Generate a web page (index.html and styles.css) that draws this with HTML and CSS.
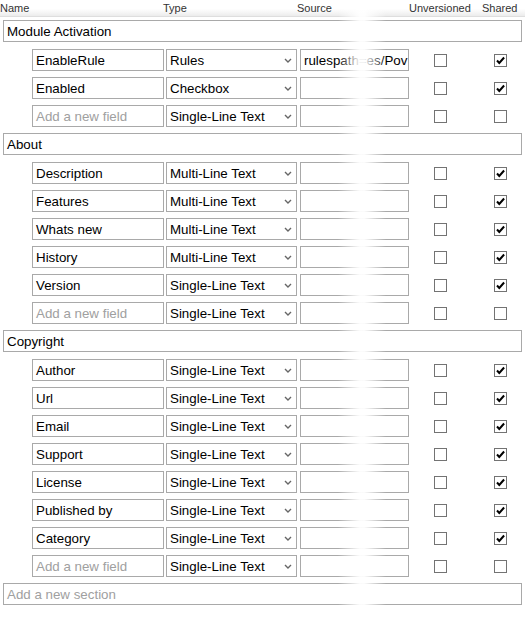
FILE: index.html
```html
<!DOCTYPE html>
<html>
<head>
<meta charset="utf-8">
<link rel="stylesheet" href="styles.css">
</head>
<body>
<div class="editor">
  <div class="head">
    <span>Name</span><span>Type</span><span>Source</span><span>Unversioned</span><span>Shared</span>
  </div>
  <div class="list">
    <div class="section">Module Activation</div>
    <div class="fields">
      <div class="row"><div class="box name">EnableRule</div><div class="box sel">Rules<svg class="chev" width="8" height="5" viewBox="0 0 8 5"><path d="M1 1l3 3 3-3" fill="none" stroke="#666" stroke-width="1.4"/></svg></div><div class="box src">rulespath=es/Pov</div><span class="cb"></span><span class="cb on"><svg width="11" height="11" viewBox="0 0 11 11"><path d="M2 5.5l2.3 2.5 4.8-5.5" fill="none" stroke="#000" stroke-width="2"/></svg></span></div>
      <div class="row"><div class="box name">Enabled</div><div class="box sel">Checkbox<svg class="chev" width="8" height="5" viewBox="0 0 8 5"><path d="M1 1l3 3 3-3" fill="none" stroke="#666" stroke-width="1.4"/></svg></div><div class="box src"></div><span class="cb"></span><span class="cb on"><svg width="11" height="11" viewBox="0 0 11 11"><path d="M2 5.5l2.3 2.5 4.8-5.5" fill="none" stroke="#000" stroke-width="2"/></svg></span></div>
      <div class="row"><div class="box name ph">Add a new field</div><div class="box sel">Single-Line Text<svg class="chev" width="8" height="5" viewBox="0 0 8 5"><path d="M1 1l3 3 3-3" fill="none" stroke="#666" stroke-width="1.4"/></svg></div><div class="box src"></div><span class="cb"></span><span class="cb"></span></div>
    </div>

    <div class="section">About</div>
    <div class="fields">
      <div class="row"><div class="box name">Description</div><div class="box sel">Multi-Line Text<svg class="chev" width="8" height="5" viewBox="0 0 8 5"><path d="M1 1l3 3 3-3" fill="none" stroke="#666" stroke-width="1.4"/></svg></div><div class="box src"></div><span class="cb"></span><span class="cb on"><svg width="11" height="11" viewBox="0 0 11 11"><path d="M2 5.5l2.3 2.5 4.8-5.5" fill="none" stroke="#000" stroke-width="2"/></svg></span></div>
      <div class="row"><div class="box name">Features</div><div class="box sel">Multi-Line Text<svg class="chev" width="8" height="5" viewBox="0 0 8 5"><path d="M1 1l3 3 3-3" fill="none" stroke="#666" stroke-width="1.4"/></svg></div><div class="box src"></div><span class="cb"></span><span class="cb on"><svg width="11" height="11" viewBox="0 0 11 11"><path d="M2 5.5l2.3 2.5 4.8-5.5" fill="none" stroke="#000" stroke-width="2"/></svg></span></div>
      <div class="row"><div class="box name">Whats new</div><div class="box sel">Multi-Line Text<svg class="chev" width="8" height="5" viewBox="0 0 8 5"><path d="M1 1l3 3 3-3" fill="none" stroke="#666" stroke-width="1.4"/></svg></div><div class="box src"></div><span class="cb"></span><span class="cb on"><svg width="11" height="11" viewBox="0 0 11 11"><path d="M2 5.5l2.3 2.5 4.8-5.5" fill="none" stroke="#000" stroke-width="2"/></svg></span></div>
      <div class="row"><div class="box name">History</div><div class="box sel">Multi-Line Text<svg class="chev" width="8" height="5" viewBox="0 0 8 5"><path d="M1 1l3 3 3-3" fill="none" stroke="#666" stroke-width="1.4"/></svg></div><div class="box src"></div><span class="cb"></span><span class="cb on"><svg width="11" height="11" viewBox="0 0 11 11"><path d="M2 5.5l2.3 2.5 4.8-5.5" fill="none" stroke="#000" stroke-width="2"/></svg></span></div>
      <div class="row"><div class="box name">Version</div><div class="box sel">Single-Line Text<svg class="chev" width="8" height="5" viewBox="0 0 8 5"><path d="M1 1l3 3 3-3" fill="none" stroke="#666" stroke-width="1.4"/></svg></div><div class="box src"></div><span class="cb"></span><span class="cb on"><svg width="11" height="11" viewBox="0 0 11 11"><path d="M2 5.5l2.3 2.5 4.8-5.5" fill="none" stroke="#000" stroke-width="2"/></svg></span></div>
      <div class="row"><div class="box name ph">Add a new field</div><div class="box sel">Single-Line Text<svg class="chev" width="8" height="5" viewBox="0 0 8 5"><path d="M1 1l3 3 3-3" fill="none" stroke="#666" stroke-width="1.4"/></svg></div><div class="box src"></div><span class="cb"></span><span class="cb"></span></div>
    </div>

    <div class="section">Copyright</div>
    <div class="fields">
      <div class="row"><div class="box name">Author</div><div class="box sel">Single-Line Text<svg class="chev" width="8" height="5" viewBox="0 0 8 5"><path d="M1 1l3 3 3-3" fill="none" stroke="#666" stroke-width="1.4"/></svg></div><div class="box src"></div><span class="cb"></span><span class="cb on"><svg width="11" height="11" viewBox="0 0 11 11"><path d="M2 5.5l2.3 2.5 4.8-5.5" fill="none" stroke="#000" stroke-width="2"/></svg></span></div>
      <div class="row"><div class="box name">Url</div><div class="box sel">Single-Line Text<svg class="chev" width="8" height="5" viewBox="0 0 8 5"><path d="M1 1l3 3 3-3" fill="none" stroke="#666" stroke-width="1.4"/></svg></div><div class="box src"></div><span class="cb"></span><span class="cb on"><svg width="11" height="11" viewBox="0 0 11 11"><path d="M2 5.5l2.3 2.5 4.8-5.5" fill="none" stroke="#000" stroke-width="2"/></svg></span></div>
      <div class="row"><div class="box name">Email</div><div class="box sel">Single-Line Text<svg class="chev" width="8" height="5" viewBox="0 0 8 5"><path d="M1 1l3 3 3-3" fill="none" stroke="#666" stroke-width="1.4"/></svg></div><div class="box src"></div><span class="cb"></span><span class="cb on"><svg width="11" height="11" viewBox="0 0 11 11"><path d="M2 5.5l2.3 2.5 4.8-5.5" fill="none" stroke="#000" stroke-width="2"/></svg></span></div>
      <div class="row"><div class="box name">Support</div><div class="box sel">Single-Line Text<svg class="chev" width="8" height="5" viewBox="0 0 8 5"><path d="M1 1l3 3 3-3" fill="none" stroke="#666" stroke-width="1.4"/></svg></div><div class="box src"></div><span class="cb"></span><span class="cb on"><svg width="11" height="11" viewBox="0 0 11 11"><path d="M2 5.5l2.3 2.5 4.8-5.5" fill="none" stroke="#000" stroke-width="2"/></svg></span></div>
      <div class="row"><div class="box name">License</div><div class="box sel">Single-Line Text<svg class="chev" width="8" height="5" viewBox="0 0 8 5"><path d="M1 1l3 3 3-3" fill="none" stroke="#666" stroke-width="1.4"/></svg></div><div class="box src"></div><span class="cb"></span><span class="cb on"><svg width="11" height="11" viewBox="0 0 11 11"><path d="M2 5.5l2.3 2.5 4.8-5.5" fill="none" stroke="#000" stroke-width="2"/></svg></span></div>
      <div class="row"><div class="box name">Published by</div><div class="box sel">Single-Line Text<svg class="chev" width="8" height="5" viewBox="0 0 8 5"><path d="M1 1l3 3 3-3" fill="none" stroke="#666" stroke-width="1.4"/></svg></div><div class="box src"></div><span class="cb"></span><span class="cb on"><svg width="11" height="11" viewBox="0 0 11 11"><path d="M2 5.5l2.3 2.5 4.8-5.5" fill="none" stroke="#000" stroke-width="2"/></svg></span></div>
      <div class="row"><div class="box name">Category</div><div class="box sel">Single-Line Text<svg class="chev" width="8" height="5" viewBox="0 0 8 5"><path d="M1 1l3 3 3-3" fill="none" stroke="#666" stroke-width="1.4"/></svg></div><div class="box src"></div><span class="cb"></span><span class="cb on"><svg width="11" height="11" viewBox="0 0 11 11"><path d="M2 5.5l2.3 2.5 4.8-5.5" fill="none" stroke="#000" stroke-width="2"/></svg></span></div>
      <div class="row"><div class="box name ph">Add a new field</div><div class="box sel">Single-Line Text<svg class="chev" width="8" height="5" viewBox="0 0 8 5"><path d="M1 1l3 3 3-3" fill="none" stroke="#666" stroke-width="1.4"/></svg></div><div class="box src"></div><span class="cb"></span><span class="cb"></span></div>
    </div>

    <div class="section ph">Add a new section</div>
  </div>
  <div class="fade"></div>
</div>
</body>
</html>
```

FILE: styles.css
```css
html, body {
  margin: 0;
  padding: 0;
  background: #fff;
}
body {
  font-family: "Liberation Sans", Arial, sans-serif;
  color: #000;
}
.editor {
  position: relative;
  width: 525px;
  height: 618px;
  overflow: hidden;
}
.head {
  display: grid;
  grid-template-columns: 163px 134px 112px 73px auto;
  height: 16px;
  line-height: 16px;
  font-size: 11px;
  color: #333;
  background: linear-gradient(#ffffff 0, #ffffff 55%, #ececec 100%);
  border-bottom: 1px solid #dedede;
}
.list {
  display: flex;
  flex-direction: column;
  gap: 6px;
  padding: 3px 0 0 3px;
}
.section {
  box-sizing: border-box;
  width: 519px;
  height: 22px;
  border: 1px solid #a9a9a9;
  padding: 0 3px;
  font-size: 13.33px;
  line-height: 21px;
}
.fields {
  display: flex;
  flex-direction: column;
  gap: 6px;
  margin-top: 1px;
  padding-left: 29px;
}
.row {
  display: flex;
  align-items: center;
  height: 22px;
}
.box {
  box-sizing: border-box;
  height: 22px;
  border: 1px solid #a9a9a9;
  padding: 0 3px;
  font-size: 13.33px;
  line-height: 21px;
  white-space: nowrap;
  overflow: hidden;
}
.name { width: 132px; margin-right: 2px; }
.sel {
  width: 131px;
  margin-right: 3px;
  display: flex;
  justify-content: space-between;
  align-items: center;
  padding-right: 4px;
}
.chev { flex: none; }
.src { width: 109px; }
.ph { color: #a0a0a0; }
.cb {
  box-sizing: border-box;
  width: 13px;
  height: 13px;
  border: 1px solid #737373;
  background: #fff;
  margin-left: 25px;
  display: flex;
  align-items: center;
  justify-content: center;
}
.cb + .cb { margin-left: 47px; }
.fade {
  position: absolute;
  top: 0;
  bottom: 0;
  left: 338px;
  width: 48px;
  background: linear-gradient(to right, rgba(255,255,255,0) 0%, rgba(255,255,255,0.95) 45%, rgba(255,255,255,0.95) 55%, rgba(255,255,255,0) 100%);
  pointer-events: none;
}
```
